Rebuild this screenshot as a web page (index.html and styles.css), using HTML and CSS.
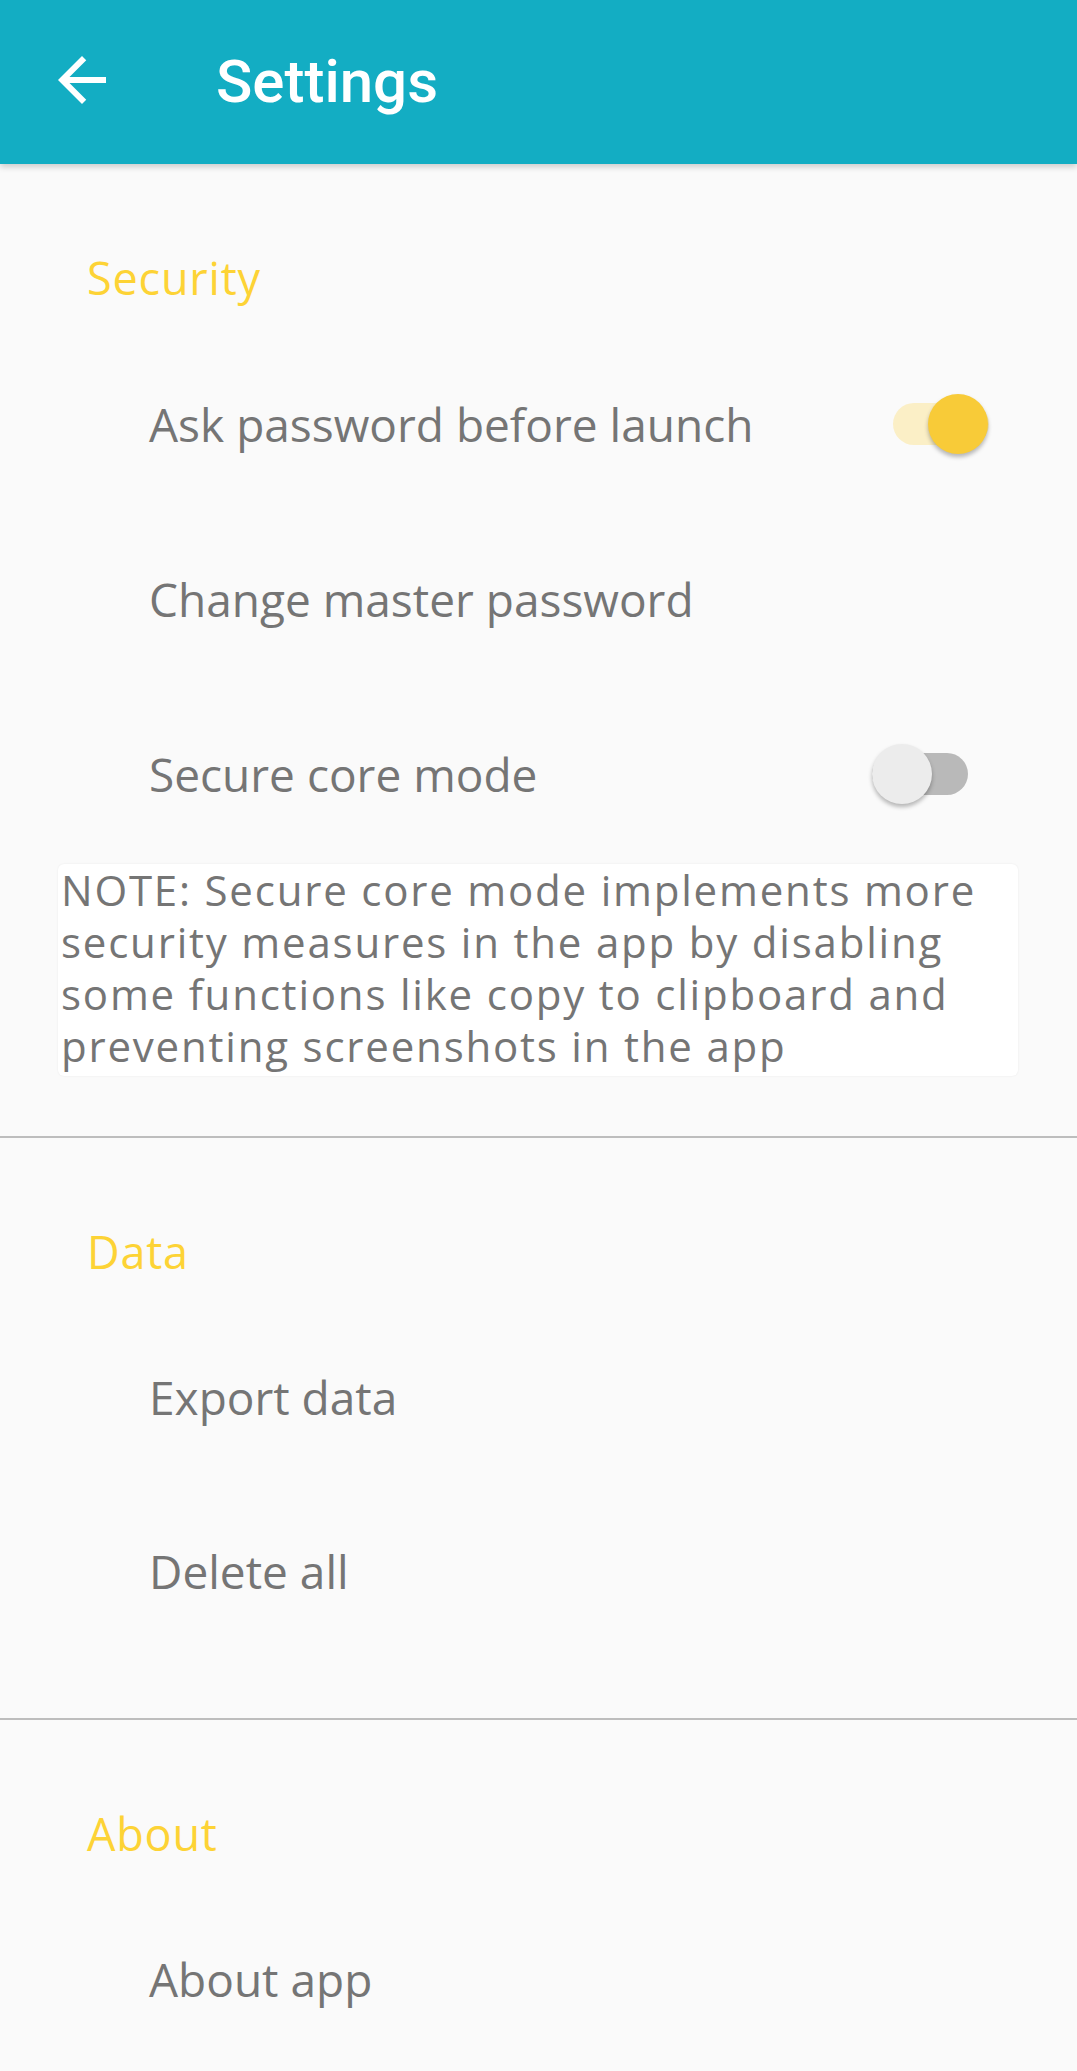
FILE: index.html
```html
<!DOCTYPE html>
<html lang="en">
<head>
<meta charset="utf-8">
<title>Settings</title>
<link rel="stylesheet" href="styles.css">
</head>
<body>
<header class="appbar">
  <svg class="back" viewBox="0 0 24 24" aria-hidden="true"><path d="M20 11H7.83l5.59-5.59L12 4l-8 8 8 8 1.41-1.41L7.83 13H20v-2z"/></svg>
  <h1 class="title">Settings</h1>
</header>
<main class="prefs">
  <section class="group">
    <h2 class="group-title">Security</h2>
    <div class="row row--switch">
      <span class="row-label">Ask password before launch</span>
      <span class="switch switch--on"><span class="track"></span><span class="thumb"></span></span>
    </div>
    <div class="row">
      <span class="row-label">Change master password</span>
    </div>
    <div class="row row--switch">
      <span class="row-label">Secure core mode</span>
      <span class="switch switch--off"><span class="track"></span><span class="thumb"></span></span>
    </div>
    <p class="note">NOTE: Secure core mode implements more<br>security measures in the app by disabling<br>some functions like copy to clipboard and<br>preventing screenshots in the app</p>
  </section>
  <hr class="divider">
  <section class="group">
    <h2 class="group-title">Data</h2>
    <div class="row"><span class="row-label">Export data</span></div>
    <div class="row"><span class="row-label">Delete all</span></div>
  </section>
  <hr class="divider">
  <section class="group group--last">
    <h2 class="group-title">About</h2>
    <div class="row"><span class="row-label">About app</span></div>
  </section>
</main>
</body>
</html>
```
FILE: styles.css
```css
html, body {
  margin: 0;
  padding: 0;
}
body {
  background: #fafafa;
  font-family: "Open Sans", "Noto Sans", sans-serif;
  color: #757575;
}
.appbar {
  height: 164px;
  background: #13adc3;
  display: flex;
  align-items: center;
  box-shadow: 0 3px 6px rgba(0, 0, 0, 0.18);
  position: relative;
  z-index: 1;
}
.back {
  width: 72px;
  height: 72px;
  fill: #ffffff;
  margin-left: 46px;
  margin-top: -4px;
  flex: none;
}
.title {
  margin: 0 0 0 98px;
  font-family: Roboto, "Liberation Sans", sans-serif;
  font-weight: 500;
  font-size: 60px;
  line-height: 164px;
  color: #ffffff;
}
.prefs {
  display: block;
}
.group {
  padding-bottom: 60px;
}
.group--last {
  padding-bottom: 0;
}
.group-title {
  margin: 0;
  padding: 84px 0 28px 87px;
  font-size: 45px;
  line-height: 60px;
  font-weight: 500;
  letter-spacing: 0.8px;
  color: #fdd335;
}
.row {
  height: 174px;
  display: flex;
  align-items: center;
  justify-content: space-between;
  padding-left: 149px;
}
.row--switch {
  height: 176px;
}
.row-label {
  font-size: 46px;
  line-height: 60px;
  color: #757575;
}
.switch {
  position: relative;
  width: 96px;
  height: 60px;
  flex: none;
}
.switch--on {
  margin-right: 88px;
}
.switch--off {
  margin-right: 109px;
}
.track {
  position: absolute;
  left: 0;
  right: 0;
  top: 9px;
  height: 42px;
  border-radius: 21px;
}
.thumb {
  position: absolute;
  top: 0;
  width: 60px;
  height: 60px;
  border-radius: 50%;
  box-shadow: 0 3px 4px rgba(0, 0, 0, 0.28);
}
.switch--on .track {
  background: #fbefc6;
}
.switch--on .thumb {
  right: 1px;
  background: #f8cb38;
}
.switch--off .track {
  background: #b9b9b9;
}
.switch--off .thumb {
  left: 0;
  background: #ececec;
}
.note {
  margin: 2px 59px 0 58px;
  padding: 0 0 4px 3px;
  background: #ffffff;
  border-radius: 6px;
  box-shadow: 0 0 2px rgba(0, 0, 0, 0.08);
  font-size: 42px;
  line-height: 52px;
  letter-spacing: 1.8px;
  color: #757575;
}
.divider {
  margin: 0;
  border: 0;
  height: 2px;
  background: #bdbdbd;
}
```
